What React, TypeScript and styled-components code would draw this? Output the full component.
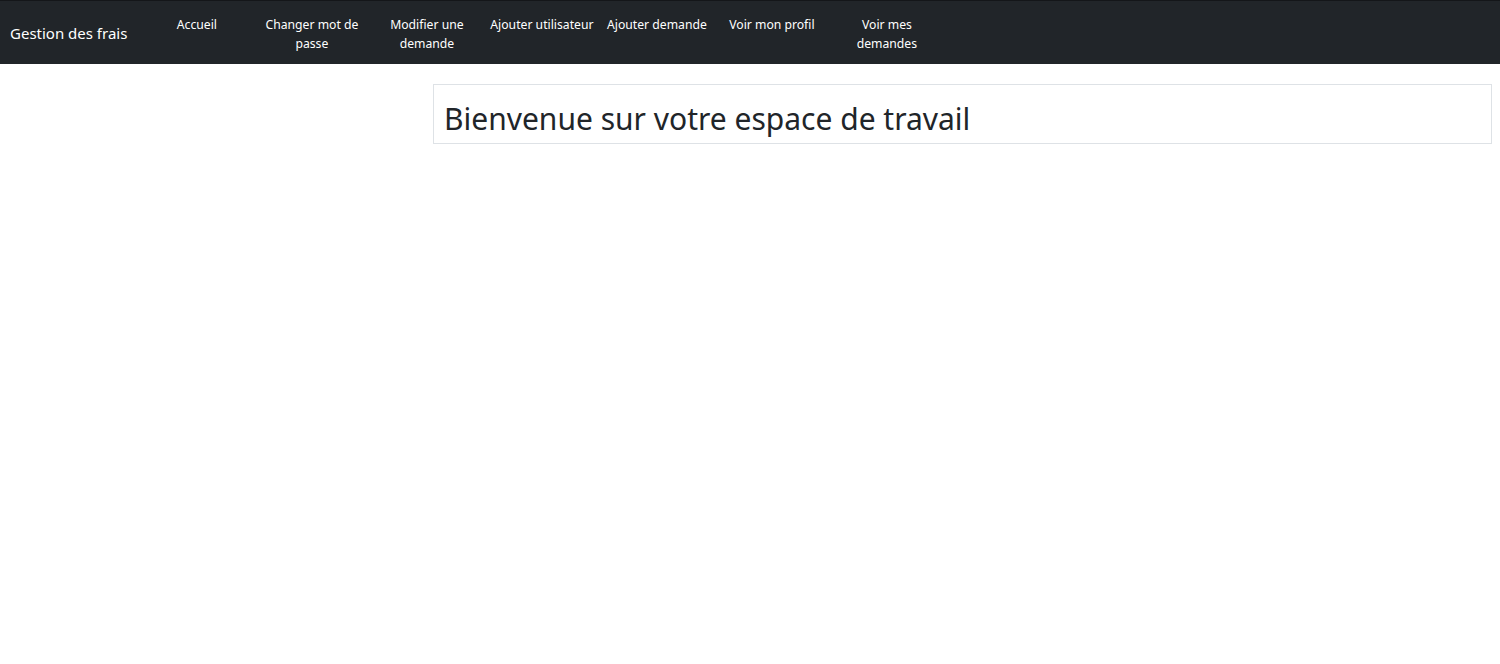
import React from 'react';
import styled, { createGlobalStyle } from 'styled-components';

const GlobalStyle = createGlobalStyle`
  html, body {
    margin: 0;
    padding: 0;
    background: #ffffff;
    font-family: 'Noto Sans', 'Open Sans', Arial, sans-serif;
    color: #212529;
  }
`;

const StyledNavbar = styled.nav`
  display: flex;
  align-items: center;
  height: 64px;
  box-sizing: border-box;
  padding: 0 10px;
  background: #212529;
  border-top: 1px solid #141619;
`;

const StyledBrand = styled.a`
  font-size: 15px;
  color: #ffffff;
  text-decoration: none;
  white-space: nowrap;
  margin-right: 12px;
`;

const StyledNavList = styled.ul`
  display: flex;
  align-items: flex-start;
  list-style: none;
  margin: 0;
  padding: 3px 0 0 0;
`;

const StyledNavItem = styled.li`
  box-sizing: border-box;
  width: 115px;
  padding: 0 4px;
  text-align: center;
  font-size: 12.2px;
  line-height: 19.5px;
`;

const StyledNavLink = styled.a`
  color: #ffffff;
  text-decoration: none;
`;

const StyledMain = styled.main`
  display: grid;
  grid-template-columns: 425px 1fr;
  padding: 20px 8px 0 8px;
`;

const StyledCard = styled.section`
  grid-column: 2;
  border: 1px solid #dee2e6;
  padding: 15px 10px 5px 10px;
`;

const StyledTitle = styled.h1`
  margin: 0;
  font-size: 30px;
  font-weight: 400;
  line-height: 38px;
  color: #212529;
`;

const links = [
  'Accueil',
  'Changer mot de passe',
  'Modifier une demande',
  'Ajouter utilisateur',
  'Ajouter demande',
  'Voir mon profil',
  'Voir mes demandes',
];

export default function App() {
  return (
    <>
      <GlobalStyle />
      <StyledNavbar>
        <StyledBrand href="#">Gestion des frais</StyledBrand>
        <StyledNavList>
          {links.map((label) => (
            <StyledNavItem key={label}>
              <StyledNavLink href="#">{label}</StyledNavLink>
            </StyledNavItem>
          ))}
        </StyledNavList>
      </StyledNavbar>
      <StyledMain>
        <StyledCard>
          <StyledTitle>Bienvenue sur votre espace de travail</StyledTitle>
        </StyledCard>
      </StyledMain>
    </>
  );
}
